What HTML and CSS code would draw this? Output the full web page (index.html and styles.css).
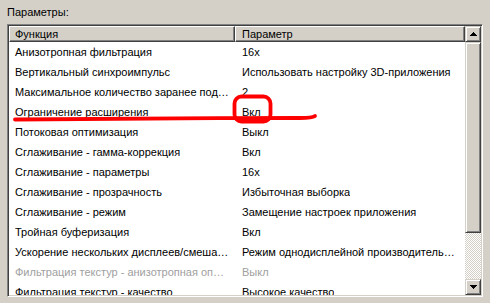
FILE: index.html
```html
<!DOCTYPE html>
<html>
<head>
<meta charset="utf-8">
<link rel="stylesheet" href="styles.css">
</head>
<body>
<div class="panel">
  <div class="label">Параметры:</div>
  <div class="listview">
    <div class="content">
      <div class="header">
        <div class="hcell c1">Функция</div>
        <div class="hcell c2">Параметр</div>
      </div>
      <div class="rows">
        <div class="row"><span class="c1">Анизотропная фильтрация</span><span class="c2">16x</span></div>
        <div class="row"><span class="c1">Вертикальный синхроимпульс</span><span class="c2">Использовать настройку 3D-приложения</span></div>
        <div class="row"><span class="c1">Максимальное количество заранее под…</span><span class="c2">2</span></div>
        <div class="row"><span class="c1">Ограничение расширения</span><span class="c2">Вкл</span></div>
        <div class="row"><span class="c1">Потоковая оптимизация</span><span class="c2">Выкл</span></div>
        <div class="row"><span class="c1">Сглаживание - гамма-коррекция</span><span class="c2">Вкл</span></div>
        <div class="row"><span class="c1">Сглаживание - параметры</span><span class="c2">16x</span></div>
        <div class="row"><span class="c1">Сглаживание - прозрачность</span><span class="c2">Избыточная выборка</span></div>
        <div class="row"><span class="c1">Сглаживание - режим</span><span class="c2">Замещение настроек приложения</span></div>
        <div class="row"><span class="c1">Тройная буферизация</span><span class="c2">Вкл</span></div>
        <div class="row"><span class="c1">Ускорение нескольких дисплеев/смеша…</span><span class="c2">Режим однодисплейной производитель…</span></div>
        <div class="row disabled"><span class="c1">Фильтрация текстур - анизотропная оп…</span><span class="c2">Выкл</span></div>
        <div class="row"><span class="c1">Фильтрация текстур - качество</span><span class="c2">Высокое качество</span></div>
      </div>
    </div>
    <div class="scrollbar">
      <div class="sbtn up"><svg width="7" height="4" viewBox="0 0 7 4"><path d="M3 0h1v1h1v1h1v1h1v1H0V3h1V2h1V1h1z" fill="#000"/></svg></div>
      <div class="thumb"></div>
      <div class="track"></div>
      <div class="sbtn down"><svg width="7" height="4" viewBox="0 0 7 4"><path d="M0 0h7v1H6v1H5v1H4v1H3V3H2V2H1V1H0z" fill="#000"/></svg></div>
    </div>
    <svg class="annot" width="490" height="303" viewBox="0 0 490 303">
      <path d="M15 119.5 C 80 118.5, 200 118, 300 118 C 308 118, 313 117.5, 315 116" stroke="#f00" stroke-width="3.8" fill="none" stroke-linecap="round"/>
      <rect x="234.5" y="96.5" width="36" height="25" rx="7" ry="7" stroke="#f00" stroke-width="3.8" fill="none"/>
    </svg>
  </div>
</div>
</body>
</html>
```
FILE: styles.css
```css
html, body {
  margin: 0;
  padding: 0;
  background: #d4d0c8;
  width: 490px;
  height: 303px;
  overflow: hidden;
}
.panel {
  font-family: "Liberation Sans", Arial, sans-serif;
  font-size: 11px;
  color: #000;
  padding: 6px 7px 0 7px;
}
.label {
  height: 18px;
  line-height: 13px;
  padding-left: 0;
}
.listview {
  width: 476px;
  height: 273px;
  box-sizing: border-box;
  border-top: 1px solid #808080;
  border-left: 1px solid #808080;
  border-right: 1px solid #fff;
  border-bottom: 1px solid #fff;
  box-shadow: inset 1px 1px 0 #404040, inset -1px -1px 0 #d4d0c8;
  padding: 1px;
  display: flex;
  background: #fff;
  overflow: hidden;
  position: relative;
}
.content {
  flex: 1;
  overflow: hidden;
  display: flex;
  flex-direction: column;
}
.header {
  display: flex;
  height: 16px;
  flex: none;
  background: #d4d0c8;
}
.hcell {
  box-sizing: border-box;
  height: 16px;
  line-height: 14px;
  border-top: 1px solid #fff;
  border-left: 1px solid #fff;
  border-right: 1px solid #404040;
  border-bottom: 1px solid #404040;
  box-shadow: inset -1px -1px 0 #808080;
  padding-left: 5px;
  white-space: nowrap;
  overflow: hidden;
}
.hcell.c1 { width: 226px; }
.hcell.c2 { width: 230px; padding-left: 6px; }
.rows {
  flex: 1;
  display: flex;
  flex-direction: column;
}
.row {
  display: flex;
  height: 20px;
  flex: none;
  line-height: 20px;
  white-space: nowrap;
}
.row .c1 { width: 227px; padding-left: 6px; box-sizing: border-box; overflow: hidden; }
.row .c2 { padding-left: 6px; overflow: hidden; }
.row.disabled { color: #a0a0a0; }
.scrollbar {
  width: 16px;
  flex: none;
  display: flex;
  flex-direction: column;
}
.sbtn, .thumb {
  background: #d4d0c8;
  box-sizing: border-box;
  border-top: 1px solid #d4d0c8;
  border-left: 1px solid #d4d0c8;
  border-right: 1px solid #404040;
  border-bottom: 1px solid #404040;
  box-shadow: inset 1px 1px 0 #fff, inset -1px -1px 0 #808080;
}
.sbtn {
  height: 16px;
  flex: none;
  display: flex;
  align-items: center;
  justify-content: center;
}
.sbtn svg { display: block; }
.thumb {
  height: 191px;
  flex: none;
}
.track {
  flex: 1;
  background: repeating-conic-gradient(#fff 0 25%, #d4d0c8 0 50%) 0 0 / 2px 2px;
}
.annot {
  position: absolute;
  left: -8px;
  top: -25px;
  pointer-events: none;
}
```
